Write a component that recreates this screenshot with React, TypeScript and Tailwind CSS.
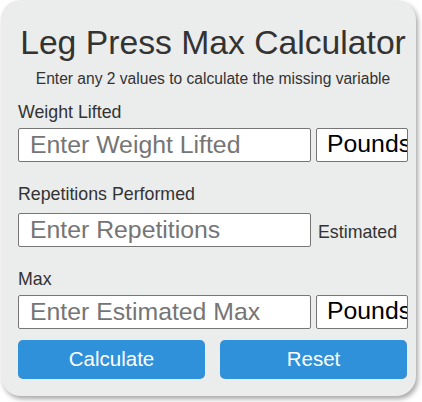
export default function App() {
  const font = { fontFamily: '"Liberation Sans", Arial, sans-serif' };
  return (
    <div className="min-h-[402px] w-[422px] bg-white" style={font}>
      <div className="ml-[1px] w-[415px] rounded-[20px] bg-[#ebecec] pb-[17px] pl-[17px] pr-[8px] pt-[22px] text-[#333] shadow-[2px_3px_5px_rgba(0,0,0,0.35)]">
        <h1 className="text-center text-[33.7px] leading-[40px]">Leg Press Max Calculator</h1>
        <p className="mt-[8px] text-center text-[15.6px] leading-[18px]">
          Enter any 2 values to calculate the missing variable
        </p>

        <label className="mt-[14px] block text-[17.8px] leading-[20px]">Weight Lifted</label>
        <div className="mt-[6px] flex items-center gap-[5px]">
          <input
            placeholder="Enter Weight Lifted"
            className="h-[34px] w-[293px] rounded-[2px] border border-[#767676] bg-white px-[11px] text-[24.8px] placeholder:text-[#757575] outline-none"
          />
          <select className="h-[34px] w-[92px] appearance-none overflow-hidden rounded-[2px] border border-[#767676] bg-white pb-[2px] pl-[10px] pr-0 pt-0 text-[24.8px] leading-[26px] text-black outline-none">
            <option>Pounds</option>
            <option>Kilograms</option>
          </select>
        </div>

        <label className="mt-[22px] block text-[17.8px] leading-[20px]">Repetitions Performed</label>
        <div className="mt-[9px] flex items-center gap-[7px]">
          <input
            placeholder="Enter Repetitions"
            className="h-[34px] w-[293px] rounded-[2px] border border-[#767676] bg-white px-[11px] text-[24.8px] placeholder:text-[#757575] outline-none"
          />
          <span className="mt-[4px] text-[17.8px]">Estimated</span>
        </div>

        <label className="mt-[22px] block text-[17.8px] leading-[20px]">Max</label>
        <div className="mt-[6px] flex items-center gap-[5px]">
          <input
            placeholder="Enter Estimated Max"
            className="h-[34px] w-[293px] rounded-[2px] border border-[#767676] bg-white px-[11px] text-[24.8px] placeholder:text-[#757575] outline-none"
          />
          <select className="h-[34px] w-[92px] appearance-none overflow-hidden rounded-[2px] border border-[#767676] bg-white pb-[2px] pl-[10px] pr-0 pt-0 text-[24.8px] leading-[26px] text-black outline-none">
            <option>Pounds</option>
            <option>Kilograms</option>
          </select>
        </div>

        <div className="mt-[11px] flex gap-[15px]">
          <button className="h-[39px] w-[187px] rounded-[5px] bg-[#2e91d9] text-[20.5px] text-white">Calculate</button>
          <button className="h-[39px] w-[187px] rounded-[5px] bg-[#2e91d9] text-[20.5px] text-white">Reset</button>
        </div>
      </div>
    </div>
  );
}
